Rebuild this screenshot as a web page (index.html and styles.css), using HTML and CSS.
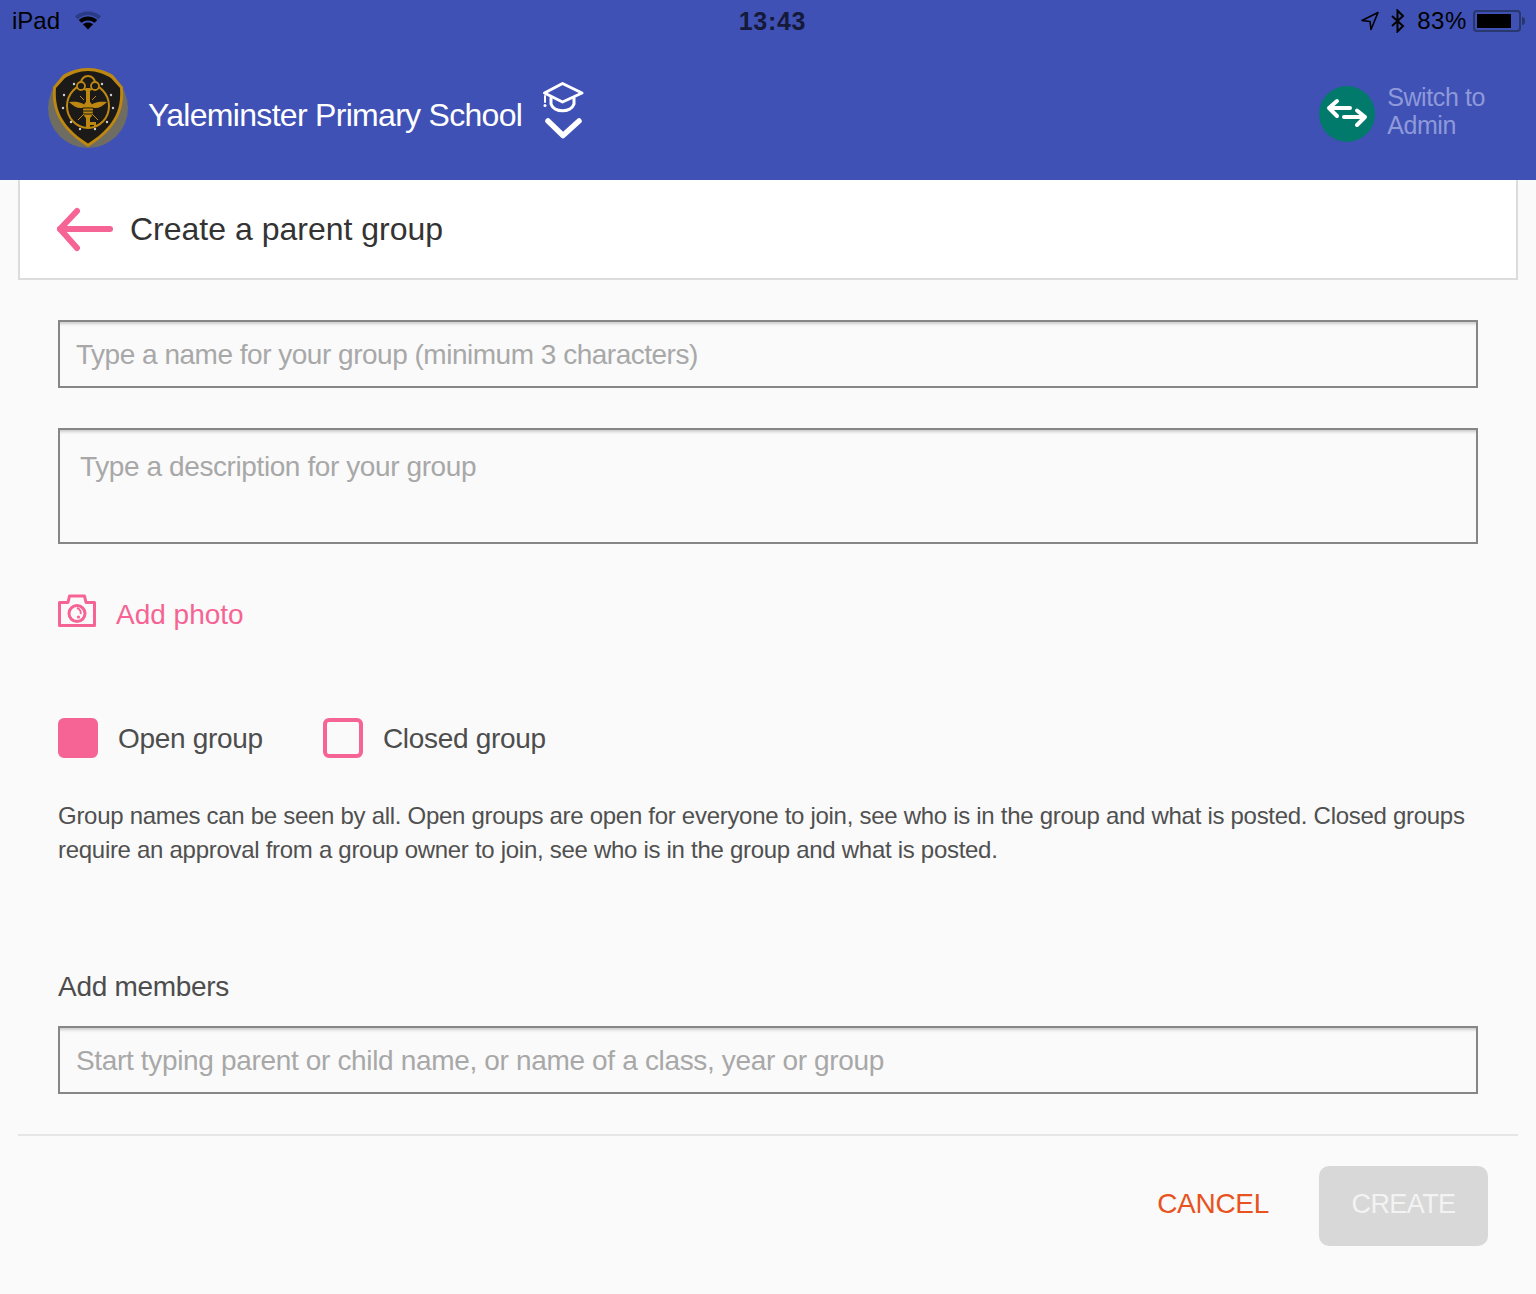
FILE: index.html
```html
<!DOCTYPE html>
<html lang="en">
<head>
<meta charset="utf-8">
<title>Create a parent group</title>
<link rel="stylesheet" href="styles.css">
</head>
<body>
<header class="top">
  <div class="status">
    <div class="status-left">
      <span>iPad</span>
      <svg class="wifi" width="28" height="22" viewBox="0 0 30 22"><path d="M1 6 C9 -1 21 -1 29 6 L26 9 C19 3 11 3 4 9Z" fill="#2c3b86"/><path d="M5 10 C11 5 19 5 25 10 L22 13 C18 9.500 12 9.500 8 13Z" fill="#000"/><path d="M9.500 14.500 C13 11.800 17 11.800 20.500 14.500 L15 20Z" fill="#000"/></svg>
    </div>
    <div class="clock">13:43</div>
    <div class="status-right">
      <svg width="20" height="22" viewBox="0 0 20 22"><path d="M18 2.500 L2 10.500 L10 11.500 L11 19.500Z" fill="none" stroke="#000" stroke-width="1.600" stroke-linejoin="round"/></svg>
      <svg class="bt" width="16" height="24" viewBox="0 0 16 24"><path d="M2 7 L13 17 L7.500 22.500 V1.500 L13 7 L2 17" fill="none" stroke="#000" stroke-width="2"/></svg>
      <span class="pct">83%</span>
      <div class="battery"><div class="battery-fill"></div></div>
      <div class="battery-cap"></div>
    </div>
  </div>
  <div class="brand">
    <div class="school">
      <svg class="crest" width="80" height="80" viewBox="0 0 80 80">
        <circle cx="40" cy="40" r="40" fill="#6f6c62"/>
        <path d="M40 0 C50 0 58 3 65 7 L75 19 C76 36 74 58 40 79 C6 58 4 36 5 19 L15 7 C22 3 30 0 40 0Z" fill="#bd8712"/>
        <path d="M40 3 C49 3 56 6 63 10 L72 20 C73 36 71 56 40 75.500 C9 56 7 36 8 20 L17 10 C24 6 31 3 40 3Z" fill="#1b1a18"/>
        <ellipse cx="40" cy="38" rx="21" ry="22" fill="none" stroke="#bd8712" stroke-width="2"/>
        <circle cx="40" cy="15" r="7" fill="#1b1a18" stroke="#bd8712" stroke-width="2"/>
        <circle cx="33" cy="18" r="4" fill="#1b1a18" stroke="#bd8712" stroke-width="1.800"/>
        <circle cx="47" cy="18" r="4" fill="#1b1a18" stroke="#bd8712" stroke-width="1.800"/>
        <path d="M38 20 H42 V60 H38Z M42 54 H48 V59 H46 V57 H42Z" fill="#bd8712"/>
        <path d="M21 34 C30 33 35 35 38 38 C33 42 27 40 21 34Z M59 34 C50 33 45 35 42 38 C47 42 53 40 59 34Z" fill="#bd8712"/>
        <ellipse cx="40" cy="42" rx="5" ry="9" fill="#bd8712"/>
        <path d="M35 40 H45 M35 43 H45 M35 46 H45" stroke="#1b1a18" stroke-width="1"/>
        <path d="M36 46 L30 52 M44 46 L50 52 M36 32 L32 28 M44 32 L48 28" stroke="#bd8712" stroke-width="1"/>
        <g fill="#cfcfcf"><circle cx="26" cy="16" r="1.200"/><circle cx="54" cy="16" r="1.200"/><circle cx="16" cy="27" r="1.200"/><circle cx="63" cy="27" r="1.200"/><circle cx="15" cy="40" r="1.200"/><circle cx="65" cy="40" r="1.200"/><circle cx="23" cy="54" r="1.200"/><circle cx="59" cy="54" r="1.200"/><circle cx="32" cy="61" r="1.200"/><circle cx="47" cy="61" r="1.200"/></g>
      </svg>
      <span class="school-name">Yaleminster Primary School</span>
      <svg class="cap" width="44" height="60" viewBox="0 0 44 60">
        <g fill="none" stroke="#fff" stroke-width="3" stroke-linejoin="round" stroke-linecap="round">
          <path d="M21.500 3.500 L41 13 L21.500 22 L3.500 13Z"/>
          <path d="M10 18 V24 C13 33 30 33 33 24 V18"/>
          <path d="M4 16 V22" stroke-width="2"/>
          <path d="M7 41 L22 55.500 L38 41" stroke-width="5.500"/>
        </g>
        <circle cx="4" cy="25.500" r="1.500" fill="#fff"/>
      </svg>
    </div>
    <div class="switch">
      <div class="switch-icon">
        <svg width="56" height="56" viewBox="0 0 56 56"><g fill="none" stroke="#fff" stroke-width="4" stroke-linecap="round" stroke-linejoin="round"><path d="M10 22 H31 M18 15 L10 22 L18 30"/><path d="M25 31 H46 M38 24.500 L46 31 L38 39"/></g></svg>
      </div>
      <div class="switch-text">Switch to<br>Admin</div>
    </div>
  </div>
</header>
<main class="page">
  <div class="title-card">
    <svg width="60" height="46" viewBox="0 0 60 46"><g fill="none" stroke="#f56494" stroke-width="6" stroke-linecap="round" stroke-linejoin="round"><path d="M4 23 H54"/><path d="M21 5 L4 23 L21 42"/></g></svg>
    <h1>Create a parent group</h1>
  </div>
  <form class="form">
    <div class="field field-name">Type a name for your group (minimum 3 characters)</div>
    <div class="field field-desc">Type a description for your group</div>
    <div class="photo">
      <svg class="camera" width="38" height="34" viewBox="0 0 38 34"><g fill="none" stroke="#f56494"><path d="M1.500 8.500 H10 L11.500 2 H26.500 L28 8.500 H36.500 V31.500 H1.500Z" stroke-width="3" stroke-linejoin="round"/><circle cx="19" cy="19.500" r="8" stroke-width="3"/><path d="M19 14 C22 15 23.500 18 22.500 20" stroke-width="2"/></g><circle cx="20.500" cy="23" r="1.600" fill="#f56494"/></svg>
      <span class="photo-label">Add photo</span>
    </div>
    <div class="choices">
      <div class="choice"><span class="box box-on"></span><span class="choice-label">Open group</span></div>
      <div class="choice"><span class="box"></span><span class="choice-label">Closed group</span></div>
    </div>
    <p class="note">Group names can be seen by all. Open groups are open for everyone to join, see who is in the group and what is posted. Closed groups require an approval from a group owner to join, see who is in the group and what is posted.</p>
    <div class="members-label">Add members</div>
    <div class="field field-name field-members">Start typing parent or child name, or name of a class, year or group</div>
  </form>
  <footer class="actions">
    <span class="cancel">CANCEL</span>
    <span class="create">CREATE</span>
  </footer>
</main>
</body>
</html>
```
FILE: styles.css
```css
* { box-sizing: border-box; }
html, body { margin: 0; padding: 0; }
body {
  width: 1536px;
  height: 1294px;
  overflow: hidden;
  background: #fafafa;
  font-family: "Liberation Sans", sans-serif;
  font-weight: 400;
  color: #333;
}
.top { height: 180px; background: #3f51b5; display: flex; flex-direction: column; }
.status {
  height: 42px;
  padding: 0 11px 0 12px;
  display: grid;
  grid-template-columns: 1fr auto 1fr;
  align-items: center;
  color: #000;
  font-size: 24px;
}
.status-left { display: flex; align-items: center; gap: 14px; }
.clock { font-weight: 700; font-size: 25px; letter-spacing: .7px; color: #15193a; margin-left: 8px; }
.status-right { display: flex; align-items: center; justify-content: flex-end; }
.bt { margin-left: 10px; }
.pct { margin-left: 11px; letter-spacing: .6px; }
.battery { width: 48px; height: 22px; margin-left: 6px; border: 2px solid #29376f; border-radius: 4px; padding: 2px; }
.battery-fill { width: 34px; height: 100%; background: #000; }
.battery-cap { width: 3px; height: 8px; margin-left: 1px; background: #29376f; border-radius: 0 3px 3px 0; }
.brand { flex: 1; display: flex; justify-content: space-between; align-items: center; padding: 0 51px 0 48px; }
.school { display: flex; align-items: center; margin-top: -6px; }
.school-name { margin: 14px 0 0 20px; color: #fff; font-size: 32px; letter-spacing: -0.7px; }
.cap { margin: 4px 0 0 19px; }
.switch { display: flex; align-items: center; gap: 12px; }
.switch-icon { width: 56px; height: 56px; border-radius: 50%; background: #027a6b; margin-top: 6px; }
.switch-icon svg { display: block; }
.switch-text { color: #8e99d9; font-size: 25px; line-height: 28px; letter-spacing: -0.4px; }
.page { padding: 0 18px; }
.title-card {
  height: 100px;
  background: #fff;
  border: 2px solid #dcdcdc;
  border-top: 0;
  padding-left: 36px;
  display: flex;
  align-items: center;
  gap: 14px;
}
.title-card h1 { margin: 0; font-size: 32px; font-weight: 400; color: #333; }
.form { padding: 40px 40px 0; }
.field {
  border: 2px solid #868686;
  box-shadow: inset 0 4px 3px -2px #ccc;
  color: #a8a8a8;
  font-size: 28px;
}
.field-name { height: 68px; padding: 2px 16px 0; display: flex; align-items: center; letter-spacing: -0.49px; }
.field-desc { height: 116px; margin-top: 40px; padding: 21px 20px 0; letter-spacing: -0.4px; }
.field-members { letter-spacing: -0.34px; }
.photo { display: flex; align-items: center; gap: 20px; margin-top: 50px; height: 40px; color: #f56494; font-size: 28px; }
.camera { margin-bottom: 7px; }
.photo-label { padding-top: 2px; }
.choices { display: flex; gap: 60px; margin-top: 84px; font-size: 28px; letter-spacing: -0.3px; color: #4d4d4d; }
.choice { display: flex; align-items: center; gap: 20px; }
.choice-label { padding-top: 2px; }
.box { width: 40px; height: 40px; border: 4px solid #f56494; border-radius: 6px; }
.box-on { background: #f56494; }
.note { margin: 41px 0 0; font-size: 24px; line-height: 34px; letter-spacing: -0.29px; color: #505050; }
.members-label { margin-top: 103px; height: 34px; line-height: 34px; font-size: 28px; letter-spacing: -0.3px; color: #4d4d4d; }
.members-label + .field { margin-top: 22px; }
.actions {
  margin-top: 40px;
  border-top: 2px solid #e6e6e6;
  padding: 30px 30px 0 0;
  display: flex;
  justify-content: flex-end;
  align-items: center;
  gap: 50px;
  font-size: 28px;
}
.cancel { color: #e8521e; letter-spacing: -0.3px; padding-bottom: 4px; }
.create { width: 169px; height: 80px; padding-bottom: 3px; display: flex; align-items: center; justify-content: center; border-radius: 10px; background: #d8d8d8; color: #f3f3f3; font-size: 27px; letter-spacing: -0.6px; }
```
